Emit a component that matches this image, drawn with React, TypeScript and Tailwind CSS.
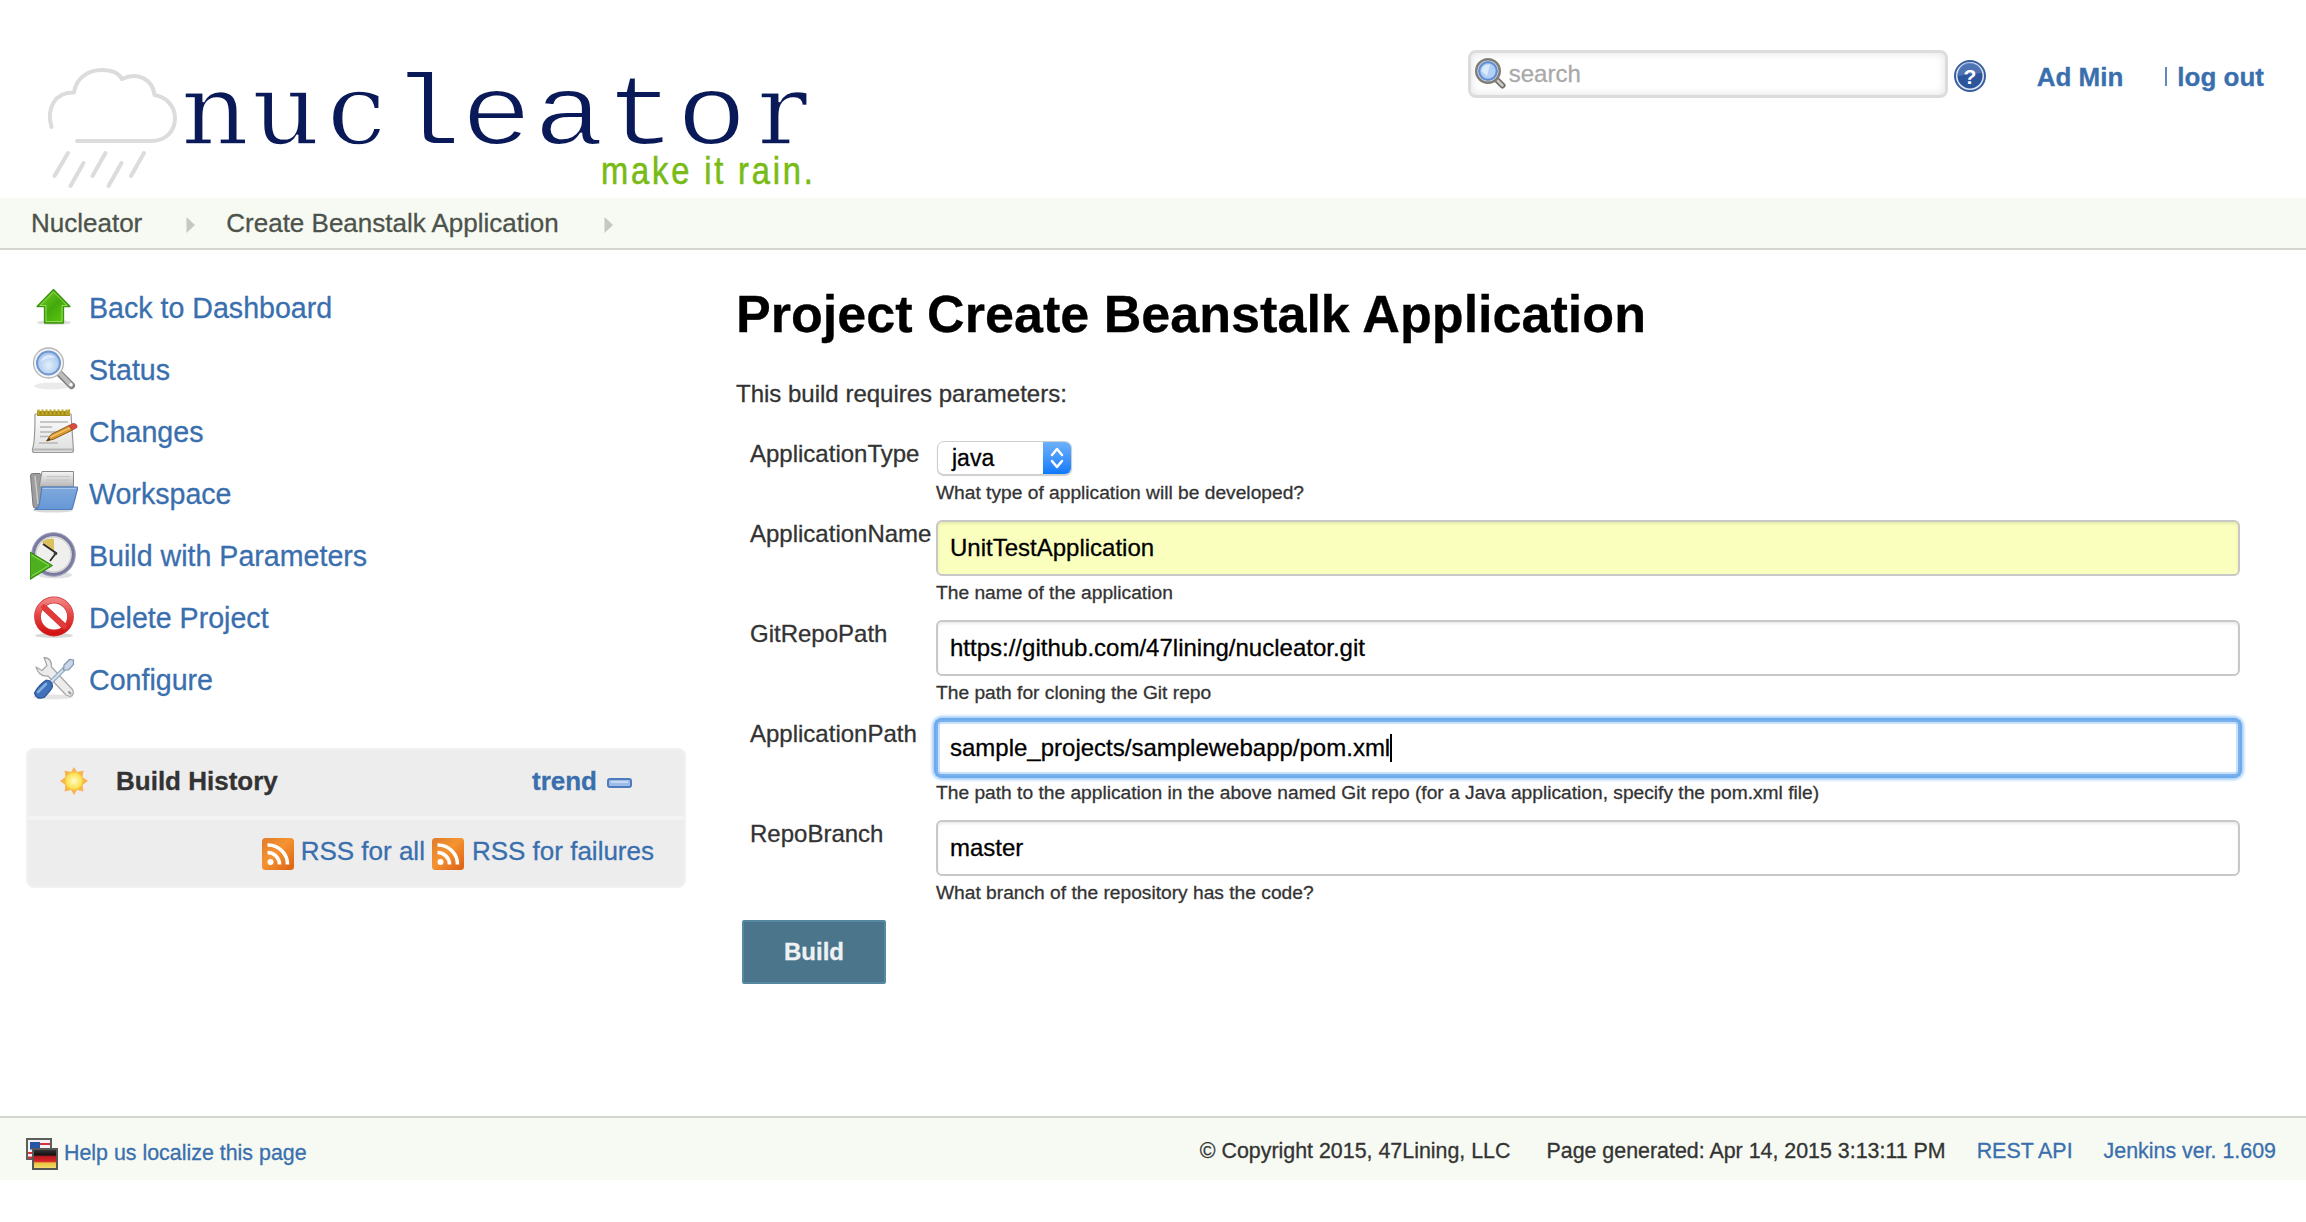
import React from "react";

const link = "text-[#3a6fae]";

function Logo() {
  return (
    <svg width="850" height="198" viewBox="0 0 850 198" className="block">
      <g fill="none" stroke="#dcdcdc" strokeWidth="4" strokeLinecap="round" strokeLinejoin="round">
        <path d="M51.5 127 C46 108 55 92 74 92.500 C76 78 88 70 102 70 C111 70 119 73 122 79 C138 71 153 80 154.500 95 C167 97 175 107 175 118 C175 131 166 141 151 141 H77" />
        <path d="M68 153 L54.500 176 M83.500 163 L70.500 186 M105.500 153 L92.500 176 M121.500 163 L108.500 186 M144 153 L131 176" />
      </g>
      <text
        transform="scale(1.17 1)"
        y="144"
        fontSize="100"
        fill="#0a1a58"
        stroke="#ffffff"
        strokeWidth="1.500"
        fontFamily="'DejaVu Serif Condensed', 'DejaVu Serif', serif"
        className="[font-stretch:condensed]"
      >
        <tspan x="154.700 215.400 279.500">nuc</tspan>
        <tspan x="334 394 456 517 578" fontFamily="'Liberation Mono', monospace" fontSize="101" strokeWidth="2">leato</tspan>
        <tspan x="647">r</tspan>
      </text>
      <text
        transform="translate(601 184) scale(.86 1)"
        fontSize="38"
        letterSpacing="3.300"
        fill="#79bb15"
        stroke="#79bb15"
        strokeWidth=".6"
        fontFamily="'Liberation Sans', Arial, sans-serif"
      >
        make it rain.
      </text>
    </svg>
  );
}

function Magnifier({ size }: { size: number }) {
  return (
    <svg width={size} height={size} viewBox="0 0 48 48">
      <defs>
        <radialGradient id="lens" cx=".5" cy=".6" r=".6">
          <stop offset="0" stopColor="#e4f0fc" />
          <stop offset="1" stopColor="#9dc0ec" />
        </radialGradient>
      </defs>
      <ellipse cx="22" cy="40" rx="18" ry="3.500" fill="#000" opacity=".08" />
      <path d="M29 27 L41.500 39.500" stroke="#7d7d7d" strokeWidth="7" strokeLinecap="round" />
      <path d="M30 27.500 L41 39" stroke="#bdbdbd" strokeWidth="4.500" strokeLinecap="round" />
      <circle cx="41" cy="38.500" r="1.500" fill="#fff" />
      <circle cx="18.500" cy="17" r="15" fill="#f4f4f4" stroke="#b5b5b5" strokeWidth="1.300" />
      <circle cx="18.500" cy="17" r="11.500" fill="url(#lens)" stroke="#7197d0" strokeWidth="2" />
      <path d="M10.500 16 A8.500 8.500 0 0 1 25.500 12 Q17.500 11 10.500 16" fill="#fff" opacity=".5" />
    </svg>
  );
}

function SearchGlyph() {
  return (
    <svg width="32" height="32" viewBox="0 0 32 32">
      <path d="M21.500 20.500 L28.500 27.500" stroke="#6f6d67" strokeWidth="6" strokeLinecap="round" />
      <path d="M23 22 L28.500 27.500" stroke="#cfcdc8" strokeWidth="2.500" strokeLinecap="round" />
      <circle cx="14" cy="13" r="11.800" fill="#e0deda" stroke="#7f7d76" strokeWidth="2.400" />
      <circle cx="14" cy="13" r="8.800" fill="#b3d0f4" stroke="#5f8ed6" strokeWidth="2.200" />
      <path d="M7.500 13 Q9 6 16 6.500 L13 18 Z" fill="#dcebfc" />
    </svg>
  );
}

function HelpGlyph() {
  return (
    <svg width="32" height="32" viewBox="0 0 32 32">
      <circle cx="16" cy="16" r="15" fill="#dfe8f5" stroke="#3a5f9f" strokeWidth="2" />
      <circle cx="16" cy="16" r="12.500" fill="#2c559c" />
      <path d="M4 16 A12 12 0 0 1 28 13 Q16 14 4 16" fill="#5c80bd" opacity=".7" />
      <text x="16" y="23.500" textAnchor="middle" fontSize="21" fontWeight="700" fill="#fff" fontFamily="'Liberation Sans', Arial, sans-serif">?</text>
    </svg>
  );
}

function UpArrow() {
  return (
    <svg width="48" height="48" viewBox="0 0 48 48">
      <defs>
        <linearGradient id="up" x1="0" y1="0" x2="1" y2="1">
          <stop offset="0" stopColor="#7cd32a" />
          <stop offset=".5" stopColor="#43a90c" />
          <stop offset="1" stopColor="#63cf12" />
        </linearGradient>
      </defs>
      <ellipse cx="24" cy="38.500" rx="17" ry="2.500" fill="#000" opacity=".13" />
      <path d="M23.500 5.500 L40 22.500 H33.500 V39 H14.500 V22.500 H7 Z" fill="url(#up)" stroke="#3d9410" strokeWidth="1.300" strokeLinejoin="round" />
      <path d="M23.500 8 L37 21.500 H32 V37.500 H16 V21.500 H10 Z" fill="none" stroke="#a4e66b" strokeWidth="1" opacity=".8" />
    </svg>
  );
}

function Notepad() {
  return (
    <svg width="48" height="48" viewBox="0 0 48 48">
      <defs>
        <linearGradient id="pad" x1="0" y1="0" x2="0" y2="1">
          <stop offset="0" stopColor="#fdfdfd" />
          <stop offset="1" stopColor="#dedede" />
        </linearGradient>
      </defs>
      <path d="M5 6 H41 L43.500 43 Q43 44.500 41 44.500 H4 Q2 44 2.500 41 Q5 34 5 6" fill="url(#pad)" stroke="#9a9a9a" strokeWidth="1.200" />
      <path d="M3.500 41.500 H43" stroke="#b5b5b5" strokeWidth="2" />
      <rect x="7" y="3" width="33" height="5" fill="#a08c1a" />
      <path d="M8.500 1.500 V7 M12.500 1.500 V7 M16.500 1.500 V7 M20.500 1.500 V7 M24.500 1.500 V7 M28.500 1.500 V7 M32.500 1.500 V7 M36.500 1.500 V7 M39 1.500 V7" stroke="#bda626" strokeWidth="2.200" />
      <path d="M10 14 H38 M10 19 H22 M10 24 H32 M10 28.500 H20 M9 35 H28" stroke="#b6b6b6" strokeWidth="1.400" />
      <path d="M16.500 33 L21 26.500 L39 17.500 L42.500 22 L24 31 Z" fill="#dc9a34" stroke="#8b5a17" strokeWidth="1" />
      <path d="M20.500 29 L40 20" stroke="#f6cb77" strokeWidth="1.300" />
      <path d="M16.500 33 L19 29.500 L20.500 32 Z" fill="#4a3717" />
      <path d="M39 17.500 L43 15.500 Q47.500 15.500 47 19.500 L42.500 22 Z" fill="#df4a3f" stroke="#a3403a" strokeWidth=".8" />
    </svg>
  );
}

function Folder() {
  return (
    <svg width="48" height="48" viewBox="0 0 48 48">
      <defs>
        <linearGradient id="fold" x1="0" y1="0" x2="0" y2="1">
          <stop offset="0" stopColor="#7fa9dc" />
          <stop offset="1" stopColor="#6697d6" />
        </linearGradient>
        <linearGradient id="paper" x1="0" y1="0" x2="0" y2="1">
          <stop offset="0" stopColor="#f5f5f5" />
          <stop offset="1" stopColor="#b5b5b5" />
        </linearGradient>
      </defs>
      <ellipse cx="23" cy="40.500" rx="20" ry="2" fill="#000" opacity=".15" />
      <path d="M.5 6 Q.5 3.500 2.500 3.500 H10 L12 6 V38 H5 Q3 38 3 35 Z" fill="#9d9d9d" stroke="#777" strokeWidth="1" />
      <path d="M5 6 L8 34" stroke="#c9c9c9" strokeWidth="1.500" />
      <path d="M12 1.500 H43.500 V17 H9 Z" fill="url(#paper)" stroke="#8a8a8a" strokeWidth="1" />
      <path d="M17 6.500 H40 M16 10 H39" stroke="#c4c4c4" strokeWidth="1.200" />
      <path d="M12 17 H47 Q48 17 47.500 19 L42.500 38 Q42 39.500 40.500 39.500 H4.500 Q9 38 9.500 33 Z" fill="url(#fold)" stroke="#4f7dbb" strokeWidth="1.200" />
      <path d="M12.500 18.500 H46" stroke="#a9c8ee" strokeWidth="1" />
    </svg>
  );
}

function ClockPlay() {
  return (
    <svg width="48" height="48" viewBox="0 0 48 48">
      <ellipse cx="25" cy="43" rx="17" ry="3.500" fill="#000" opacity=".12" />
      <circle cx="23.500" cy="22.500" r="20" fill="#efefed" stroke="#7a7a9e" strokeWidth="4" />
      <circle cx="23.500" cy="22.500" r="21.800" fill="none" stroke="#a9a9c4" strokeWidth="1" />
      <circle cx="23.500" cy="22.500" r="17.500" fill="none" stroke="#d2d2d2" strokeWidth="1.500" />
      <path d="M24 20 L12 10 Q17 6 24 7 Z" fill="#dcc05c" />
      <path d="M13 12 L26 21 L20 29" fill="none" stroke="#2b2b2b" strokeWidth="1.800" />
      <circle cx="25.500" cy="21.500" r="1.800" fill="#3a3a3a" />
      <path d="M0 20 L22.500 33.500 L0 47.500 Z" fill="#4fb01f" stroke="#2f7d10" strokeWidth="1" />
      <path d="M1.500 23 L19 33.500 L1.500 44" fill="none" stroke="#8bdc5b" strokeWidth="1" />
    </svg>
  );
}

function NoEntry() {
  return (
    <svg width="48" height="48" viewBox="0 0 48 48">
      <defs>
        <linearGradient id="no" x1="0" y1="0" x2="0" y2="1">
          <stop offset="0" stopColor="#f28080" />
          <stop offset=".5" stopColor="#e44040" />
          <stop offset="1" stopColor="#d21313" />
        </linearGradient>
      </defs>
      <ellipse cx="24" cy="41.500" rx="19" ry="2.500" fill="#000" opacity=".15" />
      <circle cx="24" cy="22.500" r="16.500" fill="#fff" stroke="#d03a3a" strokeWidth="6.800" />
      <path d="M12 11.500 L36 34" stroke="#cf3030" strokeWidth="6" />
      <circle cx="24" cy="22.500" r="16.500" fill="none" stroke="url(#no)" strokeWidth="5.500" />
      <path d="M12 11.500 L36 34" stroke="#e23b3b" strokeWidth="4.500" />
    </svg>
  );
}

function Tools() {
  return (
    <svg width="48" height="48" viewBox="0 0 48 48">
      <ellipse cx="23" cy="41" rx="20" ry="2.500" fill="#000" opacity=".1" />
      <path
        d="M14 1.500 Q22 2 21.500 11 L42.500 33.500 Q45 39 40 40.500 L36 39 L18 20 Q9 21 6 11 L12 14.500 L17 9.500 Z"
        fill="#ececec"
        stroke="#a9a9a9"
        strokeWidth="1.300"
        strokeLinejoin="round"
      />
      <path d="M39 36 L40.500 37.500" stroke="#999" strokeWidth="2" strokeLinecap="round" />
      <path d="M20 27 L35 12" stroke="#8ea3bf" strokeWidth="4.500" />
      <path d="M20 27 L35 12" stroke="#d4e0ee" strokeWidth="2.200" />
      <path d="M34 9 L39.500 3.500 L43.500 4 L43.500 8.500 L38.500 14 L33.500 14 Z" fill="#c8d6e6" stroke="#8497b0" strokeWidth="1.200" />
      <path d="M16.500 24 Q22 24.500 22.500 30.500 Q22 33.500 14 41.500 Q6 44 4.500 37 Q9 28.500 16.500 24" fill="#3f72ba" stroke="#2b5595" strokeWidth="1.200" />
      <path d="M8 36 L16 28" stroke="#87aee0" strokeWidth="2.500" strokeLinecap="round" />
    </svg>
  );
}

function Sun() {
  return (
    <svg width="28" height="28" viewBox="0 0 28 28">
      <defs>
        <radialGradient id="sun">
          <stop offset="0" stopColor="#fffcc8" />
          <stop offset="1" stopColor="#fbdc3c" />
        </radialGradient>
      </defs>
      <path
        d="M14 0 L17 5 L23.500 3.500 L22.500 10 L28 14 L22.500 18 L23.500 24.500 L17 23 L14 28 L11 23 L4.500 24.500 L5.500 18 L0 14 L5.500 10 L4.500 3.500 L11 5 Z"
        fill="#f8b454"
      />
      <circle cx="14" cy="14" r="9" fill="url(#sun)" stroke="#f9c23f" strokeWidth="1" />
    </svg>
  );
}

function Minus() {
  return (
    <svg width="25" height="10" viewBox="0 0 25 10">
      <rect x="1" y="1" width="23" height="8" rx="2" fill="#9dbce8" stroke="#4f7bbd" strokeWidth="2" />
      <path d="M4 4 H21" stroke="#c4d8f3" strokeWidth="2" />
    </svg>
  );
}

function Rss() {
  return (
    <svg width="32" height="32" viewBox="0 0 32 32" className="shrink-0">
      <defs>
        <linearGradient id="rss" x1="0" y1="0" x2="1" y2="1">
          <stop offset="0" stopColor="#e07a2c" />
          <stop offset=".45" stopColor="#f59331" />
          <stop offset="1" stopColor="#dc5f14" />
        </linearGradient>
      </defs>
      <rect width="32" height="32" rx="3.500" fill="url(#rss)" />
      <circle cx="8.500" cy="24" r="3" fill="#fff" />
      <path d="M5.500 14.500 A12 12 0 0 1 17.500 26.500 M5.500 7 A19.500 19.500 0 0 1 25.500 26.500" fill="none" stroke="#fff" strokeWidth="3.600" />
    </svg>
  );
}

function Flags() {
  return (
    <svg width="32" height="32" viewBox="0 0 32 32">
      <defs>
        <linearGradient id="de" x1="0" y1="0" x2="0" y2="1">
          <stop offset="0" stopColor="#3a3a3a" />
          <stop offset=".3" stopColor="#111" />
          <stop offset=".38" stopColor="#b81a20" />
          <stop offset=".62" stopColor="#d8252a" />
          <stop offset=".7" stopColor="#e8c53c" />
          <stop offset="1" stopColor="#f7e078" />
        </linearGradient>
      </defs>
      <rect x="1" y="1" width="24" height="20" fill="#f6f0f4" stroke="#5b5e5b" strokeWidth="2" />
      <rect x="4" y="4" width="10" height="7.500" fill="#2556a8" />
      <path d="M14 6 H24 M14 11 H24 M2 15 H24 M2 19.500 H24" stroke="#d4333e" strokeWidth="1.800" />
      <rect x="7" y="11" width="24" height="20" fill="url(#de)" stroke="#555855" strokeWidth="2" />
    </svg>
  );
}

function Crumb() {
  return (
    <svg width="9" height="20" viewBox="0 0 9 20">
      <path d="M.5 2 L9 10 L.5 18 Z" fill="#c6c8c3" />
    </svg>
  );
}

const tasks = [
  { label: "Back to Dashboard", icon: <UpArrow /> },
  { label: "Status", icon: <Magnifier size={48} /> },
  { label: "Changes", icon: <Notepad /> },
  { label: "Workspace", icon: <Folder /> },
  { label: "Build with Parameters", icon: <ClockPlay /> },
  { label: "Delete Project", icon: <NoEntry /> },
  { label: "Configure", icon: <Tools /> },
];

const fields = [
  { name: "ApplicationName", value: "UnitTestApplication", help: "The name of the application", state: "filled" },
  { name: "GitRepoPath", value: "https://github.com/47lining/nucleator.git", help: "The path for cloning the Git repo", state: "plain" },
  {
    name: "ApplicationPath",
    value: "sample_projects/samplewebapp/pom.xml",
    help: "The path to the application in the above named Git repo (for a Java application, specify the pom.xml file)",
    state: "focus",
  },
  { name: "RepoBranch", value: "master", help: "What branch of the repository has the code?", state: "plain" },
];

const boxStyle: Record<string, string> = {
  filled: "border-[#c8c8c8] bg-[#faffbd] shadow-[inset_0_2px_3px_rgba(0,0,0,0.08)]",
  plain: "border-[#c8c8c8] bg-white shadow-[inset_0_2px_3px_rgba(0,0,0,0.08)]",
  focus: "border-[#7ab0ee] bg-white shadow-[0_0_0_2px_#6dabef,0_0_3px_4px_#a5cdf8,inset_0_0_0_2px_#c9e1fb]",
};

export default function App() {
  return (
    <div className="flex h-[1222px] w-full flex-col overflow-hidden bg-white font-['Liberation_Sans',Arial,sans-serif] text-[24px] leading-[28px] text-[#333] [-webkit-text-stroke:0.3px]">
      <header className="flex h-[198px] shrink-0 items-start justify-between">
        <Logo />
        <div className={`flex items-start pt-[50px] pr-[42px] text-[26px] leading-[32px] font-bold ${link}`}>
          <div className="flex h-12 w-[480px] items-center rounded-lg border-[3px] border-[#dcdcdc] bg-white pl-[3px] shadow-[inset_0_0_10px_rgba(0,0,0,0.12)]">
            <SearchGlyph />
            <span className="pb-px pl-[3px] text-[24px] font-normal text-[#a9a9a9]">search</span>
          </div>
          <div className="ml-[6px] pt-[10px]">
            <HelpGlyph />
          </div>
          <a className="ml-[51px] pt-[11px]">Ad Min</a>
          <span className="mt-[17px] ml-[42px] h-[19px] w-[2px] bg-[#5f8abf]" />
          <a className="ml-[10px] pt-[11px]">log out</a>
        </div>
      </header>

      <nav className="flex h-[52px] shrink-0 items-center border-b-2 border-[#d3d6cf] bg-[#f6faf2] pl-[31px] text-[26px] leading-[32px] text-[#4d524b]">
        <span className="pb-px">Nucleator</span>
        <span className="pt-1 pl-[44px]"><Crumb /></span>
        <span className="pb-px pl-[31px]">Create Beanstalk Application</span>
        <span className="pt-1 pl-[45px]"><Crumb /></span>
      </nav>

      <div className="flex h-[866px] shrink-0 pt-[34px]">
        <aside className="w-[686px] shrink-0">
          <ul className="flex flex-col gap-[14px] pl-[30px]">
            {tasks.map((t) => (
              <li key={t.label} className={`flex h-12 items-center gap-[11px] text-[28.6px] leading-[48px] ${link}`}>
                {t.icon}
                <a>{t.label}</a>
              </li>
            ))}
          </ul>
          <section className="mt-[44px] ml-[26px] h-[140px] w-[660px] rounded-lg border-2 border-[#f1f1f1] bg-[#ededed] text-[26px] leading-[32px]">
            <div className="flex h-[70px] items-center border-b-4 border-[#f3f3f3] pr-[52px] pb-[4px] pl-[32px]">
              <Sun />
              <h2 className="pl-[28px] font-bold text-[#333]">Build History</h2>
              <a className={`ml-auto pr-[10px] font-bold ${link}`}>trend</a>
              <span className="flex pt-[4px]"><Minus /></span>
            </div>
            <div className={`flex items-start justify-end pt-[18px] pr-[30px] ${link}`}>
              <Rss />
              <a className="-mt-[3px] px-[7px]">RSS for all</a>
              <Rss />
              <a className="-mt-[3px] pl-[8px]">RSS for failures</a>
            </div>
          </section>
        </aside>

        <main className="ml-[50px] w-[1504px]">
          <h1 className="text-[52.1px] leading-[60px] font-bold text-black">Project Create Beanstalk Application</h1>
          <p className="mt-9">This build requires parameters:</p>
          <div className="mt-8">
            <div className="flex h-20">
              <label className="w-[200px] shrink-0 pl-[14px]">ApplicationType</label>
              <div className="pt-px">
                <div className="ml-px flex h-[34px] w-[135px] items-stretch justify-between overflow-hidden rounded-[7px] border border-[#cfcfcf] bg-white shadow-[0_1px_1px_rgba(0,0,0,0.2)]">
                  <span className="pl-[14px] text-[23px] leading-[32px] text-black">java</span>
                  <span className="flex w-[28px] items-center justify-center bg-gradient-to-b from-[#6bb1fb] to-[#0a79fb]">
                    <svg width="14" height="22" viewBox="0 0 14 22" fill="none" stroke="#fff" strokeWidth="2.500" strokeLinecap="round" strokeLinejoin="round">
                      <path d="M2 8 L7 2 L12 8 M2 14 L7 20 L12 14" />
                    </svg>
                  </span>
                </div>
                <p className="mt-[6px] text-[19.2px] leading-[24px]">What type of application will be developed?</p>
              </div>
            </div>
            {fields.map((f) => (
              <div key={f.name} className="flex h-[100px]">
                <label className="w-[200px] shrink-0 pl-[14px]">{f.name}</label>
                <div className="flex-1">
                  <div className={`flex h-14 items-center rounded-[6px] border-2 pl-[12px] text-black ${boxStyle[f.state]}`}>
                    <span className="pb-px">{f.value}</span>
                    {f.state === "focus" && <span className="h-7 w-[2px] bg-black" />}
                  </div>
                  <p className="mt-[5px] text-[19.2px] leading-[24px]">{f.help}</p>
                </div>
              </div>
            ))}
          </div>
          <button className="ml-[6px] flex h-16 w-[144px] items-center justify-center rounded-[2px] border-2 border-[#5788a1] bg-[#4b758b] font-bold text-[#eef2f4]">
            Build
          </button>
        </main>
      </div>

      <footer className="flex h-16 shrink-0 items-start border-t-2 border-[#d3d6cf] bg-[#f6faf2] pr-[30px] pl-[26px] text-[21.4px] leading-[26px]">
        <div className={`flex items-center gap-[6px] pt-5 ${link}`}>
          <Flags />
          <a className="-mt-[2px]">Help us localize this page</a>
        </div>
        <div className="ml-auto flex pt-[20px]">
          <span>© Copyright 2015, 47Lining, LLC</span>
          <span className="pl-[36px]">Page generated: Apr 14, 2015 3:13:11 PM</span>
          <a className={`pl-[31px] ${link}`}>REST API</a>
          <a className={`pl-[31px] ${link}`}>Jenkins ver. 1.609</a>
        </div>
      </footer>
    </div>
  );
}
